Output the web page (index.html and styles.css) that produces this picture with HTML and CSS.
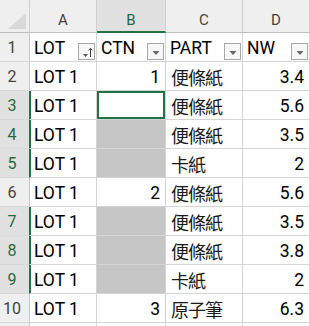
FILE: index.html
```html
<!DOCTYPE html>
<html>
<head>
<meta charset="utf-8">
<link rel="stylesheet" href="styles.css">
</head>
<body>
<div class="sheet">
  <div class="corner"><span class="tri"></span></div>
  <div class="colh">A</div>
  <div class="colh sel">B</div>
  <div class="colh">C</div>
  <div class="colh">D</div>

  <div class="rowh">1</div>
  <div class="cell hd">LOT<span class="fbtn"><svg width="14" height="14" viewBox="0 0 14 14"><path d="M3 9h5l-2.5 3z" fill="#555"/><path d="M10.5 12V3.5M8.7 5.3l1.8-2 1.8 2" stroke="#444" stroke-width="1" fill="none"/></svg></span></div>
  <div class="cell hd">CTN<span class="fbtn"><svg width="14" height="14" viewBox="0 0 14 14"><path d="M3.5 6h7l-3.5 4z" fill="#666"/></svg></span></div>
  <div class="cell hd">PART<span class="fbtn"><svg width="14" height="14" viewBox="0 0 14 14"><path d="M3.5 6h7l-3.5 4z" fill="#666"/></svg></span></div>
  <div class="cell hd">NW<span class="fbtn"><svg width="14" height="14" viewBox="0 0 14 14"><path d="M3.5 6h7l-3.5 4z" fill="#666"/></svg></span></div>

  <div class="rowh">2</div>
  <div class="cell">LOT 1</div>
  <div class="cell num">1</div>
  <div class="cell cjk">便條紙</div>
  <div class="cell num">3.4</div>

  <div class="rowh on">3</div>
  <div class="cell">LOT 1</div>
  <div class="cell active"></div>
  <div class="cell cjk">便條紙</div>
  <div class="cell num">5.6</div>

  <div class="rowh on">4</div>
  <div class="cell">LOT 1</div>
  <div class="cell blank"></div>
  <div class="cell cjk">便條紙</div>
  <div class="cell num">3.5</div>

  <div class="rowh on">5</div>
  <div class="cell">LOT 1</div>
  <div class="cell blank"></div>
  <div class="cell cjk">卡紙</div>
  <div class="cell num">2</div>

  <div class="rowh">6</div>
  <div class="cell">LOT 1</div>
  <div class="cell num">2</div>
  <div class="cell cjk">便條紙</div>
  <div class="cell num">5.6</div>

  <div class="rowh on">7</div>
  <div class="cell">LOT 1</div>
  <div class="cell blank"></div>
  <div class="cell cjk">便條紙</div>
  <div class="cell num">3.5</div>

  <div class="rowh on">8</div>
  <div class="cell">LOT 1</div>
  <div class="cell blank"></div>
  <div class="cell cjk">便條紙</div>
  <div class="cell num">3.8</div>

  <div class="rowh on">9</div>
  <div class="cell">LOT 1</div>
  <div class="cell blank"></div>
  <div class="cell cjk">卡紙</div>
  <div class="cell num">2</div>

  <div class="rowh">10</div>
  <div class="cell">LOT 1</div>
  <div class="cell num">3</div>
  <div class="cell cjk">原子筆</div>
  <div class="cell num">6.3</div>

  <div class="rowh"></div>
  <div class="cell"></div>
  <div class="cell"></div>
  <div class="cell"></div>
  <div class="cell"></div>
</div>
</body>
</html>
```

FILE: styles.css
```css
html, body {
  margin: 0;
  padding: 0;
  background: #fff;
  overflow: hidden;
}
.sheet {
  display: grid;
  grid-template-columns: 30px 67px 69px 77px 67px;
  grid-template-rows: 33px;
  grid-auto-rows: 29px;
  width: 310px;
  font-family: Roboto, "Liberation Sans", sans-serif;
  color: #000;
}
.corner {
  position: relative;
  background: #efefef;
  border-right: 1px solid #d0d0d0;
  border-bottom: 1px solid #bdbdbd;
  box-sizing: border-box;
}
.tri {
  position: absolute;
  right: 3px;
  bottom: 3px;
  width: 0;
  height: 0;
  border-left: 18px solid transparent;
  border-bottom: 16px solid #d8d8d8;
}
.colh {
  background: #efefef;
  border-right: 1px solid #d0d0d0;
  border-bottom: 1px solid #bdbdbd;
  box-sizing: border-box;
  text-align: center;
  font-size: 15px;
  line-height: 18px;
  padding-top: 11px;
  color: #444;
}
.colh.sel {
  background: #e1e1e1;
  color: #1e6b41;
  border-bottom: 2px solid #217346;
}
.rowh {
  background: #efefef;
  border-right: 1px solid #c8c8c8;
  border-bottom: 1px solid #d8d8d8;
  box-sizing: border-box;
  text-align: center;
  padding-right: 5px;
  font-size: 16px;
  line-height: 20px;
  padding-top: 5px;
  color: #444;
}
.rowh.on {
  background: #e1e1e1;
  color: #1e6b41;
  border-right-color: #217346;
  box-shadow: 1px 0 0 #217346;
}
.cell {
  position: relative;
  border-right: 1px solid #d4d4d4;
  border-bottom: 1px solid #d4d4d4;
  box-sizing: border-box;
  display: flex;
  align-items: flex-end;
  padding: 0 5px 3px 4px;
  font-size: 17.5px;
  line-height: 20px;
  white-space: nowrap;
}
.cell.num {
  justify-content: flex-end;
}
.cell.cjk {
  font-family: "Noto Sans CJK TC", "Noto Sans CJK SC", sans-serif;
  font-size: 18px;
  letter-spacing: -1px;
  padding-left: 5px;
  padding-bottom: 3px;
  color: #1a1a1a;
}
.cell.blank {
  background: #c6c6c6;
}
.cell.active {
  box-shadow: inset 0 0 0 2px #217346;
}
.fbtn {
  position: absolute;
  right: 1px;
  bottom: 1px;
  width: 17px;
  height: 17px;
  box-sizing: border-box;
  border: 1px solid #a8a8a8;
  background: #f7f7f7;
  display: flex;
  align-items: center;
  justify-content: center;
}
```
